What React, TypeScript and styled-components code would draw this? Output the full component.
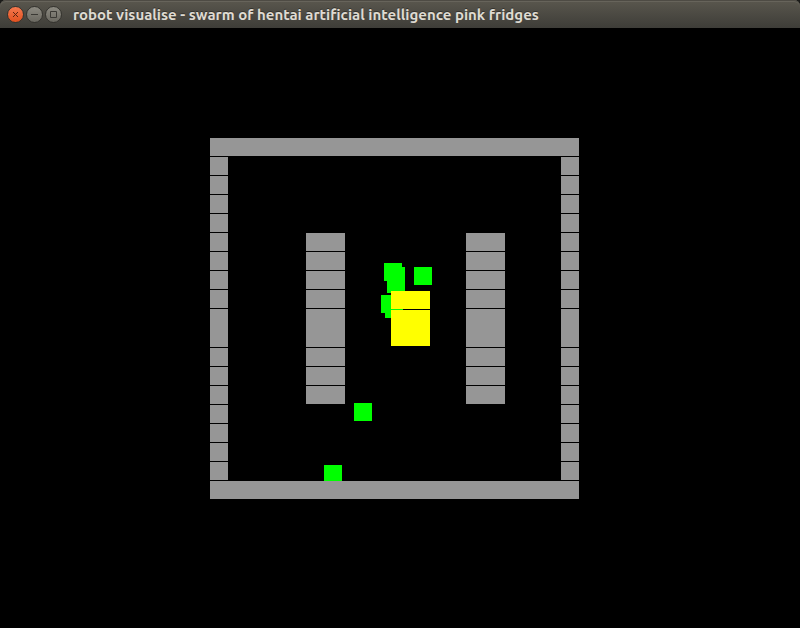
import React from "react";
import styled, { createGlobalStyle } from "styled-components";

const GlobalStyle = createGlobalStyle`
  body {
    margin: 0;
    background: #000;
  }
`;

const Window = styled.div`
  display: flex;
  flex-direction: column;
  min-height: 100vh;
  background: #000;
`;

const Frame = styled.div`
  background: #1b1b19;
`;

const TitleBar = styled.header`
  display: flex;
  align-items: center;
  gap: 11px;
  box-sizing: border-box;
  height: 28px;
  padding: 1px 7px 0;
  border-radius: 6px 6px 0 0;
  background: linear-gradient(#5a574e, #3e3d38);
  box-shadow: inset 0 1px 0 #4e4b44, inset 0 2px 0 #67645b;
`;

const Controls = styled.div`
  display: flex;
  gap: 2px;
`;

const ControlButton = styled.button<{ $close?: boolean }>`
  display: block;
  width: 17px;
  height: 17px;
  padding: 0;
  border: 1px solid #34332e;
  border-radius: 50%;
  background: ${(p) =>
    p.$close ? "linear-gradient(#f5794f, #e2511f)" : "linear-gradient(#8c8a81, #6a6860)"};
  color: ${(p) => (p.$close ? "#5c2510" : "#3a3934")};

  svg {
    display: block;
  }
`;

const Title = styled.h1`
  margin: 0;
  font: 700 15px/20px Ubuntu, "Noto Sans", sans-serif;
  color: #dfdbd2;
  text-shadow: 0 -1px 0 #33322d;
  white-space: nowrap;
`;

const Viewport = styled.main`
  flex: 1;
  padding: 110px 0 0 210px;
`;

const Arena = styled.div`
  position: relative;
  display: flex;
  flex-direction: column;
  gap: 1px;
  width: 369px;
`;

const Wall = styled.div`
  position: relative;
  z-index: 1;
  height: 18px;
  background: #969696;
`;

const Middle = styled.div`
  display: flex;
  justify-content: space-between;
`;

const Column = styled.div<{ $wide?: boolean }>`
  display: flex;
  flex-direction: column;
  gap: 1px;
  width: ${(p) => (p.$wide ? 39 : 18)}px;
  padding-top: ${(p) => (p.$wide ? 76 : 0)}px;
`;

const Pillars = styled.div`
  display: flex;
  gap: 121px;
  margin-left: 22px;
`;

const Block = styled.div<{ $tall?: boolean }>`
  height: ${(p) => (p.$tall ? 38 : 18)}px;
  background: #969696;
`;

const Robot = styled.div<{ $x: number; $y: number }>`
  position: absolute;
  left: ${(p) => p.$x}px;
  top: ${(p) => p.$y}px;
  width: 18px;
  height: 18px;
  background: #00ff00;
`;

const Crate = styled.div<{ $y: number; $height: number }>`
  position: absolute;
  left: 181px;
  top: ${(p) => p.$y}px;
  width: 39px;
  height: ${(p) => p.$height}px;
  background: #ffff00;
`;

const robots = [
  { x: 174, y: 125 },
  { x: 177, y: 129 },
  { x: 177, y: 137 },
  { x: 204, y: 129 },
  { x: 171, y: 157 },
  { x: 175, y: 162 },
  { x: 144, y: 265 },
  { x: 114, y: 327 },
];

const crates = [
  { y: 153, height: 18 },
  { y: 172, height: 36 },
];

function BlockColumn({ before, after, wide }: { before: number; after: number; wide?: boolean }) {
  return (
    <Column $wide={wide}>
      {Array.from({ length: before + 1 + after }, (_, i) => (
        <Block key={i} $tall={i === before} />
      ))}
    </Column>
  );
}

function Glyph({ d }: { d: string }) {
  return (
    <svg width="15" height="15" viewBox="0 0 15 15" fill="none" stroke="currentColor" aria-hidden="true">
      <path d={d} />
    </svg>
  );
}

export default function App() {
  return (
    <Window>
      <GlobalStyle />
      <Frame>
        <TitleBar>
          <Controls>
            <ControlButton $close aria-label="Close">
              <Glyph d="M5 5 L10 10 M10 5 L5 10" />
            </ControlButton>
            <ControlButton aria-label="Minimize">
              <Glyph d="M4 7.5 H11" />
            </ControlButton>
            <ControlButton aria-label="Maximize">
              <Glyph d="M4.5 4.5 H10.5 V10.5 H4.5 Z" />
            </ControlButton>
          </Controls>
          <Title>robot visualise - swarm of hentai artificial intelligence pink fridges</Title>
        </TitleBar>
      </Frame>
      <Viewport>
        <Arena>
          <Wall />
          <Middle>
            <BlockColumn before={8} after={7} />
            <Pillars>
              <BlockColumn wide before={4} after={3} />
              <BlockColumn wide before={4} after={3} />
            </Pillars>
            <BlockColumn before={8} after={7} />
          </Middle>
          <Wall />
          {robots.map((r, i) => (
            <Robot key={i} $x={r.x} $y={r.y} />
          ))}
          {crates.map((c, i) => (
            <Crate key={i} $y={c.y} $height={c.height} />
          ))}
        </Arena>
      </Viewport>
    </Window>
  );
}
